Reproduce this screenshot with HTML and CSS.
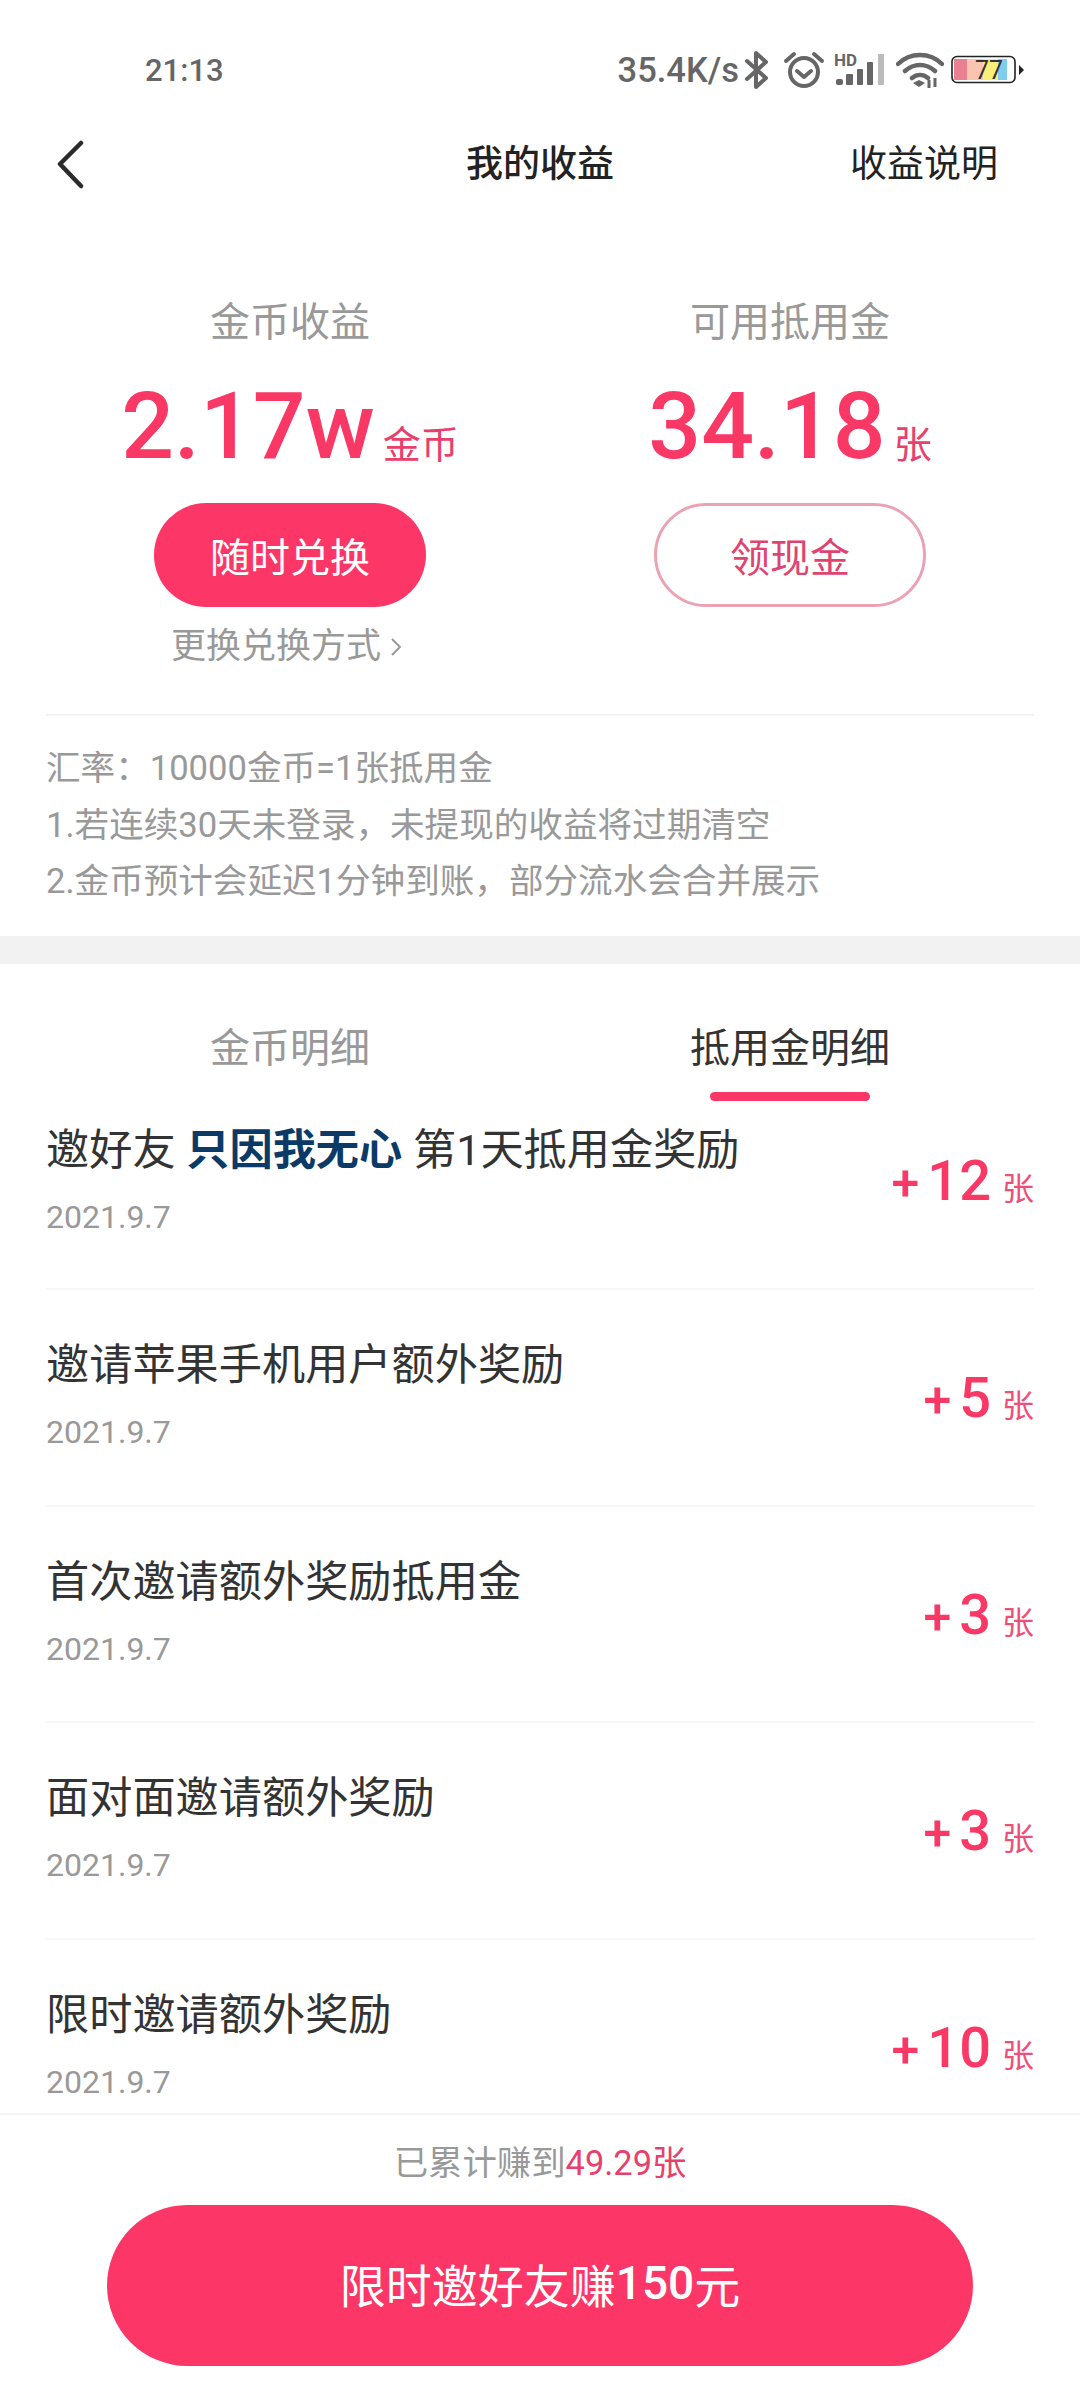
FILE: index.html
```html
<!DOCTYPE html>
<html lang="zh-CN">
<head>
<meta charset="UTF-8">
<meta name="viewport" content="width=device-width, initial-scale=1.0">
<title>我的收益</title>
<link rel="stylesheet" href="styles.css">
</head>
<body>
<div class="page">
    <div class="status">
        <span class="time">21:13</span>
        <div class="status-right">
            <span class="speed">35.4K/s</span>
            <svg class="ic-bt" width="26" height="40" viewBox="0 0 26 40"><path d="M3 11 22 28 12 37V3l10 9L3 29" fill="none" stroke="#666" stroke-width="4" stroke-linejoin="round" stroke-linecap="round"/></svg>
            <svg class="ic-alarm" width="42" height="38" viewBox="0 0 42 38"><circle cx="21" cy="21" r="14" fill="none" stroke="#666" stroke-width="4"/><path d="M14 20l7 6 7-6" fill="none" stroke="#666" stroke-width="4" stroke-linecap="round" stroke-linejoin="round"/><path d="M3 10 11 3M39 10 31 3" fill="none" stroke="#666" stroke-width="4" stroke-linecap="round"/></svg>
            <svg class="ic-signal" width="52" height="40" viewBox="0 -6 52 40"><text x="1" y="13" class="hd">HD</text><rect x="3" y="26" width="7" height="6" rx="2" fill="#666"/><rect x="13" y="21" width="7" height="11" rx="1" fill="#666"/><rect x="24" y="16" width="6" height="16" rx="1" fill="#666"/><rect x="34" y="9" width="6" height="23" rx="1" fill="#666"/><rect x="45" y="1" width="6" height="31" rx="1" fill="#bbb"/></svg>
            <svg class="ic-wifi" width="48" height="36" viewBox="0 0 48 36"><path d="M2 12C14 0 34 0 46 12M9 19c9-8 21-8 30 0M16 26c5-4 11-4 16 0" fill="none" stroke="#666" stroke-width="4.5" stroke-linecap="round"/><path d="M17 31l6-3 6 3-6 4z" fill="#666"/><path d="M33 28v8M39 26v9" stroke="#666" stroke-width="3"/></svg>
            <svg class="ic-batt" width="74" height="30" viewBox="0 0 74 30"><rect x="1" y="1.5" width="63" height="26" rx="5" fill="#fff" stroke="#222" stroke-width="1.6"/><rect x="3" y="4" width="13" height="21" fill="#e8808f"/><rect x="16" y="4" width="16" height="21" fill="#f9c4b0"/><rect x="32" y="4" width="15" height="21" fill="#f7ef7a"/><rect x="47" y="4" width="9" height="21" fill="#7fcdee"/><text x="38" y="24" class="batt-num">77</text><path d="M68 10l5 5-5 5z" fill="#222"/></svg>
        </div>
    </div>

    <div class="header">
        <svg class="back" width="30" height="50" viewBox="0 0 30 50"><path d="M25 3 4 24l21 22" fill="none" stroke="#2b2b2b" stroke-width="4.5" stroke-linecap="round" stroke-linejoin="round"/></svg>
        <div class="title">我的收益</div>
        <div class="explain">收益说明</div>
    </div>

    <div class="stats">
        <div class="stat">
            <div class="stat-label">金币收益</div>
            <div class="stat-value"><span class="big">2.17w</span><span class="unit">金币</span></div>
            <div class="btn btn-fill">随时兑换</div>
            <div class="change">更换兑换方式<svg width="12" height="22" viewBox="0 0 12 22"><path d="M2 3l8 8-8 8" fill="none" stroke="#999" stroke-width="2"/></svg></div>
        </div>
        <div class="stat">
            <div class="stat-label">可用抵用金</div>
            <div class="stat-value"><span class="big">34.18</span><span class="unit">张</span></div>
            <div class="btn btn-line">领现金</div>
        </div>
    </div>

    <div class="rules">
        <div>汇率：10000金币=1张抵用金</div>
        <div>1.若连续30天未登录，未提现的收益将过期清空</div>
        <div>2.金币预计会延迟1分钟到账，部分流水会合并展示</div>
    </div>

    <div class="band"></div>

    <div class="tabs">
        <div class="tab">金币明细</div>
        <div class="tab tab-on">抵用金明细</div>
    </div>

    <div class="list">
        <div class="row row-first">
            <div class="row-text">
                <div class="row-title">邀好友 <b class="name">只因我无心</b> 第1天抵用金奖励</div>
                <div class="row-date">2021.9.7</div>
            </div>
            <div class="amount"><span class="plus">+</span><span class="num">12</span><span class="amount-unit">张</span></div>
        </div>
        <div class="row">
            <div class="row-text">
                <div class="row-title">邀请苹果手机用户额外奖励</div>
                <div class="row-date">2021.9.7</div>
            </div>
            <div class="amount"><span class="plus">+</span><span class="num">5</span><span class="amount-unit">张</span></div>
        </div>
        <div class="row">
            <div class="row-text">
                <div class="row-title">首次邀请额外奖励抵用金</div>
                <div class="row-date">2021.9.7</div>
            </div>
            <div class="amount"><span class="plus">+</span><span class="num">3</span><span class="amount-unit">张</span></div>
        </div>
        <div class="row">
            <div class="row-text">
                <div class="row-title">面对面邀请额外奖励</div>
                <div class="row-date">2021.9.7</div>
            </div>
            <div class="amount"><span class="plus">+</span><span class="num">3</span><span class="amount-unit">张</span></div>
        </div>
        <div class="row">
            <div class="row-text">
                <div class="row-title">限时邀请额外奖励</div>
                <div class="row-date">2021.9.7</div>
            </div>
            <div class="amount"><span class="plus">+</span><span class="num">10</span><span class="amount-unit">张</span></div>
        </div>
    </div>

    <div class="footer">
        <div class="total">已累计赚到<span class="total-num">49.29张</span></div>
        <div class="invite">限时邀好友赚<b class="invite-num">150</b>元</div>
    </div>
</div>
</body>
</html>
```

FILE: styles.css
```css
* {
    box-sizing: border-box;
}

body {
    margin: 0;
    background-color: #fff;
    font-family: Roboto, "Noto Sans CJK SC", sans-serif;
    color: #333;
}

.page {
    height: 2400px;
    display: flex;
    flex-direction: column;
    overflow: hidden;
}

/* status bar */
.status {
    height: 140px;
    padding: 0 55px 0 145px;
    display: flex;
    justify-content: space-between;
    align-items: center;
    color: #666;
}

.time {
    font-size: 31px;
    font-weight: 500;
}

.status-right {
    display: flex;
    align-items: center;
}

.speed {
    font-size: 34.5px;
    font-weight: 500;
    margin-right: 5px;
}

.ic-bt {
    margin-right: 13px;
}

.ic-alarm {
    margin-right: 8px;
}

.ic-signal {
    margin-right: 11px;
    margin-bottom: 6px;
}

.ic-wifi {
    margin-right: 7px;
}

.hd {
    font-family: Roboto, sans-serif;
    font-size: 17px;
    font-weight: 700;
    fill: #666;
}

.batt-num {
    font-family: Roboto, sans-serif;
    font-size: 25px;
    fill: #333;
    text-anchor: middle;
}

/* header */
.header {
    height: 50px;
    padding: 0 82px;
    display: grid;
    grid-template-columns: 1fr auto 1fr;
    align-items: center;
}

.back {
    display: block;
    margin-left: -26px;
}

.title {
    font-size: 37px;
    line-height: 44px;
    font-weight: 500;
    color: #222;
}

.explain {
    font-size: 37px;
    line-height: 44px;
    color: #222;
    text-align: right;
}

/* stats */
.stats {
    display: grid;
    grid-template-columns: 1fr 1fr;
    padding: 108px 40px 0;
    height: 524px;
}

.stat {
    display: flex;
    flex-direction: column;
    align-items: center;
}

.stat-label {
    font-size: 40px;
    line-height: 50px;
    color: #999;
}

.stat-value {
    height: 100px;
    margin-top: 29px;
    display: flex;
    align-items: baseline;
    color: #f93866;
}

.big {
    font-size: 93px;
    line-height: 100px;
    font-weight: 500;
}

.unit {
    font-size: 38px;
    margin-left: 8px;
    color: #e8406c;
}

.btn {
    width: 272px;
    height: 104px;
    margin-top: 26px;
    border-radius: 52px;
    display: flex;
    align-items: center;
    justify-content: center;
    font-size: 40px;
}

.btn-fill {
    background-color: #fc3767;
    color: #fff;
}

.btn-line {
    border: 3px solid #eba3b3;
    color: #e0436f;
}

.change {
    margin-top: 20px;
    margin-right: 7px;
    font-size: 35px;
    line-height: 40px;
    color: #999;
    display: flex;
    align-items: center;
    gap: 9px;
}

/* rules */
.rules {
    margin: 0 46px;
    padding-top: 24px;
    height: 222px;
    border-top: 2px solid #f4f4f4;
    font-size: 34.6px;
    line-height: 56.5px;
    color: #999;
}

.band {
    height: 28px;
    background-color: #f2f2f2;
}

/* tabs */
.tabs {
    height: 137px;
    padding: 0 40px;
    display: grid;
    grid-template-columns: 1fr 1fr;
}

.tab {
    padding-top: 60px;
    text-align: center;
    font-size: 40px;
    line-height: 50px;
    color: #999;
    position: relative;
}

.tab-on {
    color: #333;
}

.tab-on::after {
    content: "";
    position: absolute;
    left: 50%;
    bottom: 0;
    width: 160px;
    height: 9px;
    margin-left: -80px;
    border-radius: 5px;
    background-color: #fc3767;
}

/* list */
.list {
    flex: 1;
    overflow: hidden;
    padding: 0 46px;
}

.row {
    height: 216.5px;
    padding-top: 51px;
    display: flex;
    justify-content: space-between;
    border-bottom: 2px solid #f6f6f6;
}

.row-first {
    height: 189px;
    padding-top: 25px;
}

.row-title {
    font-size: 43.2px;
    line-height: 50px;
    color: #333;
}

.name {
    color: #0b3a66;
    font-weight: 700;
}

.row-date {
    margin-top: 16px;
    font-size: 32px;
    line-height: 50px;
    color: #999;
}

.amount {
    height: 58px;
    margin-top: 24px;
    display: flex;
    align-items: baseline;
    color: #f93866;
}

.row-first .amount {
    margin-top: 22px;
}

.plus {
    font-size: 50px;
    font-weight: 500;
    margin-right: 8px;
}

.num {
    font-size: 56px;
    font-weight: 500;
}

.amount-unit {
    font-size: 32px;
    margin-left: 11px;
    color: #ee4f78;
}

/* footer */
.footer {
    height: 287px;
    border-top: 2px solid #f4f4f4;
    padding-top: 26px;
    display: flex;
    flex-direction: column;
    align-items: center;
}

.total {
    font-size: 34.4px;
    line-height: 44px;
    color: #999;
}

.total-num {
    color: #e8406c;
}

.invite {
    width: 866px;
    height: 161px;
    margin-top: 20px;
    padding-bottom: 6px;
    border-radius: 81px;
    background-color: #fc3767;
    color: #fff;
    display: flex;
    align-items: center;
    justify-content: center;
    font-size: 46px;
}

.invite-num {
    font-weight: 500;
}
```
